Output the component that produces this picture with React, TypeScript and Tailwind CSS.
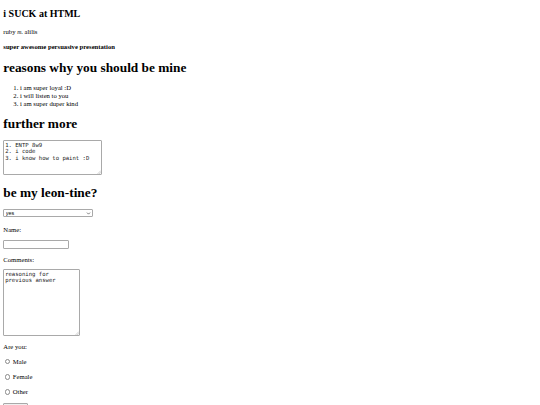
import { ChevronDown } from 'lucide-react'

function Grip() {
  return (
    <svg
      width="4"
      height="4"
      viewBox="0 0 4 4"
      className="absolute right-[1px] bottom-[1px]"
    >
      <path d="M4 0.5 L0.5 4 M4 2.2 L2.2 4" stroke="#a0a0a0" strokeWidth="0.5" />
    </svg>
  )
}

function Radio({ label }: { label: string }) {
  return (
    <label className="mt-[6.67px] flex h-[8.5px] items-center pl-[1.5px] text-[6.67px] leading-[7.66px]">
      <input
        type="radio"
        name="gender"
        className="m-0 mr-[2.6px] h-[5.4px] w-[5.4px] appearance-none rounded-full border-[0.6px] border-[#8a8a8a] bg-white"
      />
      <span>{label}</span>
    </label>
  )
}

export default function App() {
  return (
    <div className="flex min-h-screen flex-col items-start bg-white pl-[3.33px] font-['Liberation_Serif',serif] text-black">
      <h2 className="mt-[8.3px] text-[10px] leading-[11.5px] font-bold">i SUCK at HTML</h2>

      <p className="mt-[8.3px] text-[6.67px] leading-[7.66px]">
        ruby <i className="text-[5.8px]">m.</i> alilis
      </p>

      <p className="mt-[6.67px] text-[6.67px] leading-[7.66px] font-bold">
        super awesome persuasive presentation
      </p>

      <h1 className="mt-[8.93px] text-[13.33px] leading-[15.33px] font-bold">
        reasons why you should be mine
      </h1>

      <ol className="mt-[8.93px] list-decimal pl-[16.67px] text-[6.67px] leading-[7.66px]">
        <li>i am super loyal :D</li>
        <li>i will listen to you</li>
        <li>i am super duper kind</li>
      </ol>

      <h1 className="mt-[8.93px] text-[13.33px] leading-[15.33px] font-bold">further more</h1>

      <div className="relative mt-[9px]">
        <textarea
          readOnly
          defaultValue={'1. ENTP 8w9\n2. i code\n3. i know how to paint :D'}
          className="block h-[34.5px] w-[99px] resize-none overflow-hidden rounded-[1px] border border-[#a9a9a9] bg-white px-[0.8px] py-[0.4px] font-['DejaVu_Sans_Mono',monospace] text-[5.6px] leading-[6.4px] text-[#222]"
        />
        <Grip />
      </div>

      <h1 className="mt-[10px] text-[13.33px] leading-[15.33px] font-bold">be my leon-tine?</h1>

      <div className="relative mt-[9.2px]">
        <select
          defaultValue="yes"
          className="block h-[8px] w-[90px] appearance-none rounded-[1px] border border-[#a9a9a9] bg-white pl-[1.5px] font-['Liberation_Sans',sans-serif] text-[5.4px] leading-[6px] text-black"
        >
          <option value="yes">yes</option>
          <option value="no">no</option>
        </select>
        <ChevronDown
          size={5}
          strokeWidth={3}
          className="pointer-events-none absolute top-[1.5px] right-[2px] text-[#333]"
        />
      </div>

      <p className="mt-[8.5px] text-[6.67px] leading-[7.66px]">Name:</p>

      <input
        type="text"
        className="mt-[6.67px] block h-[8.75px] w-[66px] rounded-[1px] border border-[#a9a9a9] bg-white"
      />

      <p className="mt-[7px] text-[6.67px] leading-[7.66px]">Comments:</p>

      <div className="relative mt-[5.5px]">
        <textarea
          readOnly
          defaultValue={'reasoning for\nprevious answer'}
          className="block h-[66.5px] w-[77px] resize-none overflow-hidden rounded-[1px] border border-[#a9a9a9] bg-white px-[0.8px] py-[0.4px] font-['DejaVu_Sans_Mono',monospace] text-[5.6px] leading-[6.4px] text-[#222]"
        />
        <Grip />
      </div>

      <p className="mt-[7.5px] text-[6.67px] leading-[7.66px]">Are you:</p>

      <Radio label="Male" />
      <Radio label="Female" />
      <Radio label="Other" />

      <button
        aria-label="Submit"
        className="mt-[6.67px] h-[9px] w-[25px] rounded-[1px] border border-[#a9a9a9] bg-[#efefef]"
      />
    </div>
  )
}
